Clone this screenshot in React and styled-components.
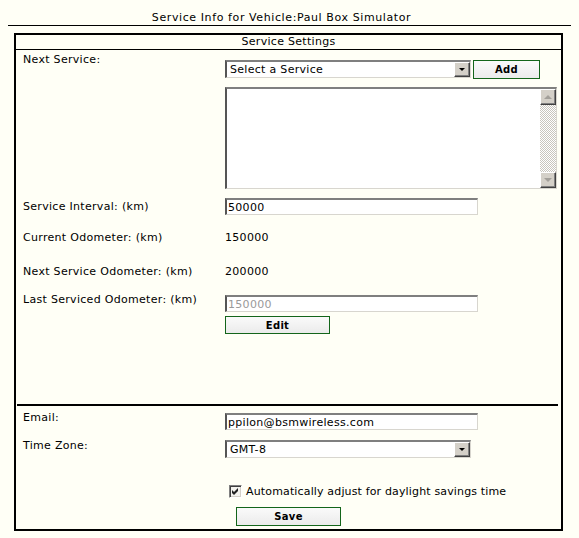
import React from "react";
import styled, { createGlobalStyle } from "styled-components";

const GlobalStyle = createGlobalStyle`
  html, body { margin: 0; background: #fffff6; }
  body {
    padding: 11px 8px 0;
    font-family: Verdana, "DejaVu Sans", sans-serif;
    font-size: 11px;
    line-height: 13px;
    letter-spacing: 0.3px;
    color: #000;
  }
`;

const Title = styled.div`
  text-align: center;
  height: 14px;
  border-bottom: 1px solid #000;
  padding-right: 16px;
  letter-spacing: 0.6px;
`;

const Panel = styled.div`
  margin: 7px 8px 0 6px;
  border: 2px solid #000;
  padding-bottom: 3px;
`;

const PanelHeader = styled.div`
  height: 14px;
  border-bottom: 1px solid #000;
  text-align: center;
`;

const Row = styled.div`
  display: grid;
  grid-template-columns: 202px 1fr;
  padding-left: 7px;
`;

const Label = styled.div`
  padding-top: ${(p) => p.$pt || 0}px;
`;

const Control = styled.div`
  padding-top: ${(p) => p.$pt || 0}px;
  display: flex;
  flex-direction: column;
  align-items: flex-start;
`;

const Inline = styled.div`
  display: flex;
  gap: 2px;
  align-items: flex-start;
`;

const Value = styled.div``;

const TextInput = styled.input`
  box-sizing: border-box;
  width: 253px;
  height: 17px;
  margin: 0;
  padding: 0 0 0 1px;
  font-family: Verdana, "DejaVu Sans", sans-serif;
  font-size: 11px;
  letter-spacing: 0.3px;
  color: ${(p) => (p.disabled ? "#9a9a9a" : "#000")};
  background: #fff;
  border-style: solid;
  border-width: 2px 1px 1px 2px;
  border-color: #7f7f7f #d8d6cf #d8d6cf #555;
  outline: none;
`;

const SelectBox = styled.div`
  box-sizing: border-box;
  width: 246px;
  height: 18px;
  display: flex;
  align-items: center;
  justify-content: space-between;
  background: #fff;
  border-style: solid;
  border-width: 2px 1px 1px 2px;
  border-color: #7f7f7f #d8d6cf #d8d6cf #555;
  padding-left: 3px;
`;

const SelectText = styled.span`
  line-height: 13px;
`;

const RaisedButton = styled.span`
  box-sizing: border-box;
  display: flex;
  align-items: center;
  justify-content: center;
  width: ${(p) => p.$w || 16}px;
  height: ${(p) => p.$h || 15}px;
  background: #d4d0c8;
  border-style: solid;
  border-width: 1px;
  border-color: #fff #404040 #404040 #fff;
  box-shadow: inset -1px -1px #808080;
`;

const Triangle = styled.span`
  width: 0;
  height: 0;
  border-left: ${(p) => p.$s || 3}px solid transparent;
  border-right: ${(p) => p.$s || 3}px solid transparent;
  ${(p) =>
    p.$up
      ? `border-bottom: ${p.$s || 3}px solid ${p.$c || "#000"};`
      : `border-top: ${p.$s || 3}px solid ${p.$c || "#000"};`}
`;

const Button = styled.button`
  box-sizing: border-box;
  width: ${(p) => p.$w}px;
  height: ${(p) => p.$h || 19}px;
  margin: 0;
  margin-top: ${(p) => p.$mt || 0}px;
  margin-left: ${(p) => p.$ml || 0}px;
  padding: 0;
  font-family: Verdana, "DejaVu Sans", sans-serif;
  font-size: 10px;
  font-weight: bold;
  letter-spacing: 0.3px;
  color: #000;
  background: linear-gradient(#fafafa, #ebebeb);
  border: 1px solid #13651a;
`;

const ListBox = styled.div`
  box-sizing: border-box;
  margin-top: 8px;
  width: 332px;
  height: 102px;
  display: flex;
  justify-content: flex-end;
  background: #fff;
  border-style: solid;
  border-width: 2px 1px 1px 2px;
  border-color: #7f7f7f #d8d6cf #d8d6cf #555;
`;

const ScrollBar = styled.div`
  width: 16px;
  display: flex;
  flex-direction: column;
`;

const ScrollTrack = styled.div`
  flex: 1;
  background: repeating-conic-gradient(#c8c5bd 0 25%, #fff 0 50%) 0 0 / 2px 2px;
`;

const Separator = styled.div`
  margin: 70px 3px 0 1px;
  height: 2px;
  background: #000;
`;

const CheckRow = styled.div`
  display: flex;
  align-items: center;
  gap: 4px;
  margin: 27px 0 0 213px;
  letter-spacing: 0.15px;
`;

const CheckBox = styled.span`
  box-sizing: border-box;
  width: 13px;
  height: 13px;
  display: flex;
  align-items: center;
  justify-content: center;
  background: #f4f3ee;
  border-style: solid;
  border-width: 1px;
  border-color: #808080 #fff #fff #808080;
  box-shadow: inset 1px 1px #404040, inset -1px -1px #d4d0c8;
`;

function Check() {
  return (
    <svg width="7" height="7" viewBox="0 0 7 7">
      <path d="M0 2 L2 4 L6 0 V3 L2 7 L0 5 Z" fill="#222" />
    </svg>
  );
}

export default function App() {
  return (
    <>
      <GlobalStyle />
      <Title>Service Info for Vehicle:Paul Box Simulator</Title>
      <Panel>
        <PanelHeader>Service Settings</PanelHeader>

        <Row>
          <Label $pt={3}>Next Service:</Label>
          <Control $pt={10}>
            <Inline>
              <SelectBox>
                <SelectText>Select a Service</SelectText>
                <RaisedButton>
                  <Triangle $s={3} />
                </RaisedButton>
              </SelectBox>
              <Button $w={67} $h={19}>Add</Button>
            </Inline>
            <ListBox>
              <ScrollBar>
                <RaisedButton $w={16} $h={16}>
                  <Triangle $up $s={4} $c="#a3a09a" />
                </RaisedButton>
                <ScrollTrack />
                <RaisedButton $w={16} $h={16}>
                  <Triangle $s={4} $c="#a3a09a" />
                </RaisedButton>
              </ScrollBar>
            </ListBox>
          </Control>
        </Row>

        <Row>
          <Label $pt={11}>Service Interval: (km)</Label>
          <Control $pt={9}>
            <TextInput defaultValue="50000" />
          </Control>
        </Row>

        <Row>
          <Label $pt={16}>Current Odometer: (km)</Label>
          <Control $pt={16}>
            <Value>150000</Value>
          </Control>
        </Row>

        <Row>
          <Label $pt={21}>Next Service Odometer: (km)</Label>
          <Control $pt={21}>
            <Value>200000</Value>
          </Control>
        </Row>

        <Row>
          <Label $pt={15}>Last Serviced Odometer: (km)</Label>
          <Control $pt={17}>
            <TextInput defaultValue="150000" disabled />
            <Button $w={105} $h={18} $mt={4}>Edit</Button>
          </Control>
        </Row>

        <Separator />

        <Row>
          <Label $pt={5}>Email:</Label>
          <Control $pt={7}>
            <TextInput defaultValue="ppilon@bsmwireless.com" />
          </Control>
        </Row>

        <Row>
          <Label $pt={9}>Time Zone:</Label>
          <Control $pt={10}>
            <SelectBox>
              <SelectText>GMT-8</SelectText>
              <RaisedButton>
                <Triangle $s={3} />
              </RaisedButton>
            </SelectBox>
          </Control>
        </Row>

        <CheckRow>
          <CheckBox>
            <Check />
          </CheckBox>
          <span>Automatically adjust for daylight savings time</span>
        </CheckRow>

        <Button $w={105} $h={19} $mt={9} $ml={220}>Save</Button>
      </Panel>
    </>
  );
}
